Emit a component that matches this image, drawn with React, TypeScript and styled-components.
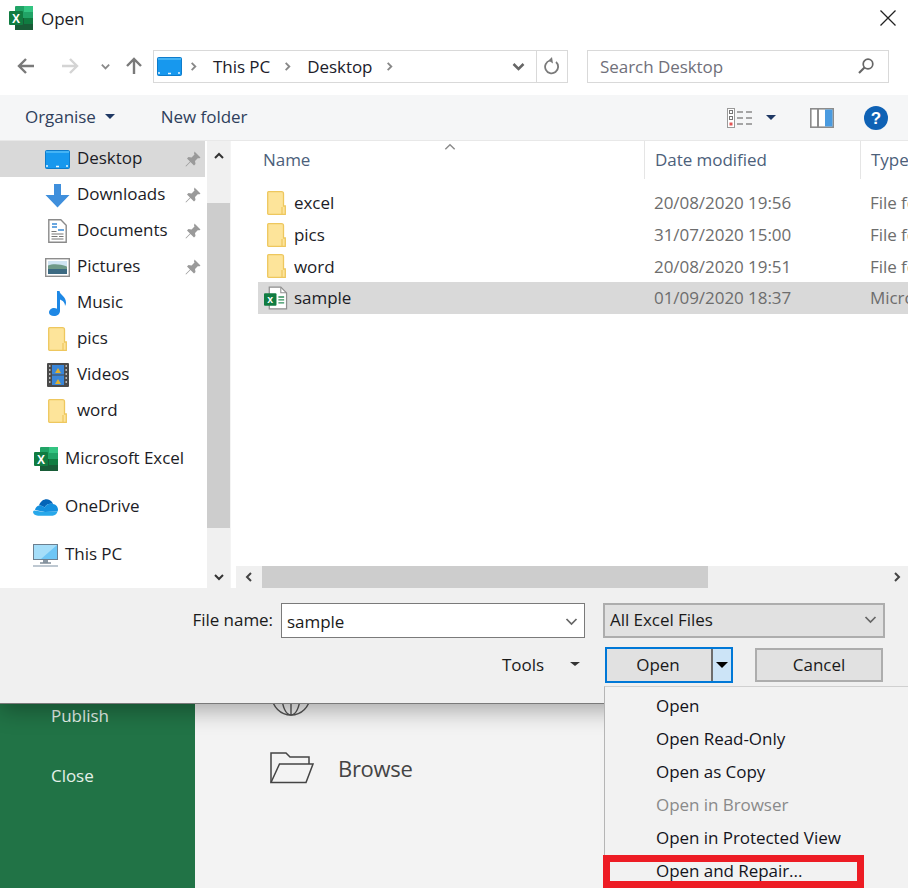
import styled, { createGlobalStyle } from "styled-components";

const GlobalStyle = createGlobalStyle`
	html, body {
		margin: 0;
		padding: 0;
		background: #f3f3f3;
	}
	* {
		box-sizing: border-box;
	}
`;

const FONT = `"Open Sans", "Noto Sans", sans-serif`;

const PageBase = styled.div`
	position: relative;
	width: 908px;
	height: 888px;
	overflow: hidden;
	font-family: ${FONT};
	font-size: 17px;
	letter-spacing: -0.05px;
	color: #1c1c26;
`;

const Dialog = styled.div`
	position: relative;
	z-index: 1;
	height: 704px;
	display: flex;
	flex-direction: column;
	background: #fff;
	border-bottom: 1px solid #7a7a7a;
	box-shadow: 0 6px 22px rgba(0, 0, 0, 0.32);
`;

const TitleBar = styled.div`
	height: 38px;
	display: flex;
	align-items: center;
	gap: 8px;
	padding: 0 12px 2px 9px;
`;

const TitleText = styled.span`
	flex: 1;
`;

const AddressRow = styled.div`
	height: 57px;
	display: flex;
	align-items: center;
	padding: 0 16px 1px 15px;
`;

const NavButton = styled.span<{ $width: number; $left?: number }>`
	width: ${(p) => p.$width}px;
	margin-left: ${(p) => p.$left ?? 0}px;
	display: flex;
	justify-content: center;
	align-items: center;
`;

const AddressBox = styled.div`
	width: 415px;
	height: 33px;
	margin-left: 9px;
	display: flex;
	align-items: center;
	border: 1px solid #d9d9d9;
	padding-left: 3px;
`;

const CrumbSeparator = styled.span<{ $first?: boolean }>`
	display: flex;
	margin-left: ${(p) => (p.$first ? 6 : 0)}px;
`;

const Crumb = styled.span`
	margin: 0 12px 0 14px;
	color: #20202a;
`;

const AddressEnd = styled.span`
	margin-left: auto;
	display: flex;
	align-items: center;
	height: 100%;
`;

const RefreshCell = styled.span`
	width: 31px;
	height: 100%;
	margin-left: 10px;
	border-left: 1px solid #d9d9d9;
	display: flex;
	align-items: center;
	justify-content: center;
`;

const SearchBox = styled.div`
	width: 302px;
	height: 33px;
	margin-left: 19px;
	display: flex;
	align-items: center;
	justify-content: space-between;
	padding: 0 13px 0 12px;
	border: 1px solid #d9d9d9;
	color: #70707a;
`;

const Toolbar = styled.div`
	height: 45px;
	display: flex;
	align-items: center;
	gap: 46px;
	padding: 0 19px 0 25px;
	background: #f5f6f7;
	color: #2f3f5c;
`;

const ToolbarLabel = styled.span`
	display: flex;
	align-items: center;
	gap: 9px;
	padding-bottom: 2px;
`;

const ToolbarRight = styled.span`
	margin-left: auto;
	display: flex;
	align-items: center;
`;

const ViewCaret = styled.span`
	display: flex;
	margin: 0 34px 0 13px;
`;

const HelpSlot = styled.span`
	display: flex;
	margin-left: 29px;
`;

const Caret = styled.span<{ $color?: string; $size?: number }>`
	display: inline-block;
	width: 0;
	height: 0;
	border-left: ${(p) => p.$size ?? 5.5}px solid transparent;
	border-right: ${(p) => p.$size ?? 5.5}px solid transparent;
	border-top: ${(p) => (p.$size ?? 5.5) - 0.5}px solid ${(p) => p.$color ?? "#1f3864"};
`;

const Body = styled.div`
	flex: 1;
	min-height: 0;
	display: flex;
	border-top: 1px solid #e8e8e8;
`;

const Sidebar = styled.div`
	width: 207px;
	display: flex;
	flex-direction: column;
	gap: 12px;
`;

const NavGroup = styled.div`
	display: flex;
	flex-direction: column;
`;

const NavItem = styled.div<{ $level: number; $selected?: boolean }>`
	height: 36px;
	width: 205px;
	display: flex;
	align-items: center;
	gap: 7px;
	padding-left: ${(p) => (p.$level === 1 ? 45 : 33)}px;
	padding-right: 4px;
	background: ${(p) => (p.$selected ? "#d9d9d9" : "transparent")};
`;

const NavIcon = styled.span`
	width: 25px;
	height: 25px;
	display: flex;
	align-items: center;
	justify-content: center;
	flex-shrink: 0;
`;

const NavLabel = styled.span`
	padding-bottom: 3px;
`;

const NavPin = styled.span`
	margin-left: auto;
	display: flex;
`;

const VScroll = styled.div`
	width: 24px;
	display: flex;
	flex-direction: column;
	background: #f0f0f0;
	border-right: 1px solid #f4f4f4;
`;

const VScrollEnd = styled.div<{ $height: number; $end?: boolean }>`
	height: ${(p) => p.$height}px;
	display: flex;
	justify-content: center;
	align-items: ${(p) => (p.$end ? "flex-end" : "flex-start")};
	padding: ${(p) => (p.$end ? "0 0 5px" : "9px 0 0")};
`;

const VScrollThumb = styled.div`
	flex: 1;
	width: 23px;
	background: #cdcdcd;
`;

const ListPane = styled.div`
	flex: 1;
	min-width: 0;
	display: flex;
	flex-direction: column;
	padding-left: 5px;
`;

const ListHeader = styled.div`
	position: relative;
	height: 38px;
	display: grid;
	grid-template-columns: 386px 216px 1fr;
	margin-left: 22px;
	color: #4c607a;
`;

const HeaderCell = styled.div<{ $first?: boolean }>`
	display: flex;
	align-items: center;
	padding-left: ${(p) => (p.$first ? 5 : 10)}px;
	padding-bottom: 2px;
	border-left: ${(p) => (p.$first ? "none" : "1px solid #e5e5e5")};
`;

const SortMark = styled.span`
	position: absolute;
	left: 185px;
	top: -1px;
	display: flex;
`;

const Rows = styled.div`
	flex: 1;
	padding-top: 8px;
	margin-left: 22px;
`;

const FileRow = styled.div<{ $selected?: boolean }>`
	height: 31.7px;
	display: grid;
	grid-template-columns: 386px 216px 1fr;
	align-items: center;
	background: ${(p) => (p.$selected ? "#d9d9d9" : "transparent")};
	white-space: nowrap;
	overflow: hidden;
`;

const NameCell = styled.div`
	display: flex;
	align-items: center;
	padding-left: 6px;
`;

const FileIconSlot = styled.span<{ $folder: boolean }>`
	width: 30px;
	display: flex;
	padding-left: ${(p) => (p.$folder ? 3 : 0)}px;
`;

const MetaCell = styled.div`
	padding-left: 10px;
	color: #6d6d6d;
	overflow: hidden;
`;

const HScroll = styled.div`
	height: 22px;
	display: flex;
	background: #f0f0f0;
`;

const HScrollEnd = styled.div<{ $grow?: boolean }>`
	width: ${(p) => (p.$grow ? "auto" : "26px")};
	flex: ${(p) => (p.$grow ? 1 : "none")};
	display: flex;
	align-items: center;
	justify-content: ${(p) => (p.$grow ? "flex-end" : "center")};
	padding-right: ${(p) => (p.$grow ? "5px" : 0)};
`;

const HScrollThumb = styled.div`
	width: 446px;
	background: #cdcdcd;
`;

const Footer = styled.div`
	height: 115px;
	background: #f0f0f0;
	display: flex;
	flex-direction: column;
	padding: 15px 23px 0 0;
	color: #1a1a1a;
`;

const FooterRow = styled.div`
	display: flex;
	align-items: center;
	justify-content: flex-end;
`;

const FieldLabel = styled.span`
	margin-right: 8px;
	padding-bottom: 2px;
`;

const Combo = styled.div<{ $width: number; $filled?: boolean }>`
	width: ${(p) => p.$width}px;
	height: 35px;
	margin-left: ${(p) => (p.$filled ? 18 : 0)}px;
	display: flex;
	align-items: center;
	justify-content: space-between;
	padding: ${(p) => (p.$filled ? "0 5px 2px" : "1px 5px 0")};
	background: ${(p) => (p.$filled ? "#e1e1e1" : "#fff")};
	border-style: solid;
	border-color: ${(p) => (p.$filled ? "#adadad" : "#7a7a7a")};
	border-width: ${(p) => (p.$filled ? "2px" : "1.5px")};
`;

const ActionRow = styled(FooterRow)`
	margin-top: 9px;
	margin-right: 2px;
`;

const ToolsLabel = styled.span`
	display: flex;
	align-items: center;
	gap: 26px;
	margin-right: 25px;
	padding-bottom: 2px;
`;

const SplitButton = styled.div`
	width: 128px;
	height: 36px;
	display: flex;
	border: 2px solid #0078d7;
	background: #e1e1e1;
`;

const SplitMain = styled.span`
	flex: 1;
	display: flex;
	align-items: center;
	justify-content: center;
	padding: 0 2px 1px 0;
	border-right: 2px solid #6d6d6d;
`;

const SplitArrow = styled.span`
	width: 18px;
	display: flex;
	align-items: center;
	justify-content: center;
	background: #cce4f7;
`;

const CancelButton = styled.div`
	width: 128px;
	height: 34px;
	margin-left: 22px;
	padding-bottom: 1px;
	display: flex;
	align-items: center;
	justify-content: center;
	background: #e1e1e1;
	border: 2px solid #adadad;
`;

const Backstage = styled.div`
	height: 184px;
	display: flex;
`;

const BackstageNav = styled.div`
	width: 195px;
	background: #217346;
	color: #e4f0e9;
	padding-left: 51px;
	display: flex;
	flex-direction: column;
	gap: 37px;
`;

const BackstageLink = styled.div`
	height: 23px;
	display: flex;
	align-items: center;
`;

const BackstageMain = styled.div`
	flex: 1;
	background: #f3f3f3;
	padding-left: 75px;
	color: #444;
	display: flex;
	flex-direction: column;
`;

const GlobeClip = styled.div`
	height: 12px;
	display: flex;
	align-items: flex-end;
	overflow: hidden;
	padding-left: 1px;
`;

const BrowseRow = styled.div`
	margin-top: 36px;
	display: flex;
	align-items: center;
	gap: 24px;
	font-size: 22px;
	letter-spacing: -0.3px;
`;

const Menu = styled.div`
	position: absolute;
	z-index: 2;
	left: 604px;
	top: 686px;
	width: 310px;
	height: 210px;
	padding: 2px 0 0 51px;
	background: #f2f2f2;
	border-left: 1px solid #b5b5b5;
	border-top: 1px solid #d0d0d0;
`;

const MenuItem = styled.div<{ $disabled?: boolean }>`
	height: 33px;
	display: flex;
	align-items: center;
	color: ${(p) => (p.$disabled ? "#8a8a8a" : "#14141c")};
`;

const Highlight = styled.div`
	position: absolute;
	z-index: 3;
	left: 603px;
	top: 855px;
	width: 261px;
	height: 33px;
	border: 7px solid #ed1c24;
`;

function ExcelLogo({ size }: { size: number }) {
	return (
		<svg width={size} height={size} viewBox="0 0 24 24">
			<rect x="6" y="0" width="18" height="24" rx="1" fill="#21a366" />
			<rect x="15" y="0" width="9" height="6" fill="#33c481" />
			<rect x="6" y="12" width="9" height="12" fill="#185c37" />
			<rect x="15" y="12" width="9" height="6" fill="#107c41" />
			<rect x="15" y="18" width="9" height="6" fill="#185c37" />
			<rect x="0" y="5" width="14" height="14" rx="1" fill="#107c41" />
			<text x="7" y="16.5" textAnchor="middle" fontSize="12" fontWeight="700" fontFamily="Liberation Sans, sans-serif" fill="#fff">
				X
			</text>
		</svg>
	);
}

function DesktopIcon() {
	return (
		<svg width="25" height="19" viewBox="0 0 25 19">
			<rect x="0.5" y="0.5" width="24" height="18" rx="1" fill="#1798ee" stroke="#0f7ccb" />
			<path d="M1 1h23v2H1z" fill="#45b4f5" />
			<path d="M1 16h2M11 16.5h3M21 16h2" stroke="#e8f5ff" strokeWidth="1.4" />
		</svg>
	);
}

function DownloadIcon() {
	return (
		<svg width="25" height="25" viewBox="0 0 25 25">
			<path d="M9 1h7v11h8.5L12.5 24.5.5 12H9z" fill="#3f8fdc" />
		</svg>
	);
}

function DocumentsIcon() {
	return (
		<svg width="19" height="24" viewBox="0 0 19 24">
			<path d="M.8.8h12l5.4 5.4v17H.8z" fill="#fff" stroke="#8a8a8a" strokeWidth="1.4" />
			<path d="M4 5h5M4 8h5M10 11h6" stroke="#3a8ad6" strokeWidth="1.5" />
			<path d="M3.5 12.5h5M3.5 15h12M3.5 17.5h6M11 17.5h4.5M3.5 20h12" stroke="#777" strokeWidth="1.2" />
		</svg>
	);
}

function PicturesIcon() {
	return (
		<svg width="25" height="19" viewBox="0 0 25 19">
			<rect x="0.7" y="0.7" width="23.6" height="17.6" fill="#fff" stroke="#8d8d8d" strokeWidth="1.4" />
			<rect x="3" y="3" width="19" height="5" fill="#cfe4f2" />
			<path d="M3 7.5c5-2 12-1.5 19 1V11H3z" fill="#6f9a88" />
			<rect x="3" y="11" width="19" height="5" fill="#3c6a82" />
		</svg>
	);
}

function MusicIcon() {
	return (
		<svg width="18" height="25" viewBox="0 0 18 25">
			<path d="M8 0h2.5c.5 4 6.500 5.500 6.500 11.500 0 1.500-.5 2.500-1 3.500.2-3.500-2.500-5.500-5-6.500V20c0 3-2.800 5-6 5C2 25 0 23.500 0 21.500 0 19 2.500 17 5 17c1.200 0 2.200.3 3 .8z" fill="#1e88e5" />
		</svg>
	);
}

function FolderIcon() {
	return (
		<svg width="19" height="24" viewBox="0 0 19 24">
			<path d="M1.500.7h13c1 0 2 1 2 2V15h1.800v8.300H1.500c-.5 0-.8-.3-.8-.8V1.500c0-.5.3-.8.8-.8z" fill="#fde49a" stroke="#eec75e" strokeWidth="1.3" />
			<path d="M15 16v7" stroke="#eec75e" strokeWidth="1.2" />
		</svg>
	);
}

function VideosIcon() {
	return (
		<svg width="22" height="24" viewBox="0 0 22 24">
			<rect width="22" height="24" rx="1" fill="#4a4a4a" />
			<rect x="5" y="2" width="12" height="9.5" fill="#3a86d8" />
			<rect x="5" y="12.5" width="12" height="9.5" fill="#3a86d8" />
			<path d="M8 10l3-5 3 5zM8 21l3-5 3 5z" fill="#e0b030" />
			<path d="M2 3h1.500M2 7h1.500M2 11h1.500M2 15h1.500M2 19h1.500M18.500 3H20M18.500 7H20M18.500 11H20M18.500 15H20M18.500 19H20" stroke="#ddd" strokeWidth="1.5" />
		</svg>
	);
}

function OneDriveIcon() {
	return (
		<svg width="25" height="17" viewBox="0 0 25 17">
			<path d="M6 6.500C7.500 2 11 0 14 .3c2.800.2 5 2 6 4.700-4-1-7 .5-8.500 3.500C10 7 8 6.300 6 6.500z" fill="#0364b8" />
			<path d="M6 6.500c2-.2 4 .5 5.500 2 1.500-3 4.500-4.500 8.500-3.500 2.500.2 5 2.500 5 5.500 0 .8-.2 1.500-.5 2L12 13 2 11c.5-2.500 2-4 4-4.500z" fill="#1490df" />
			<path d="M1 11.500 12 13l12.500-.5c-.7 2.500-2.500 4-5 4.200H5c-3 0-5-2-5-3.700 0-.5.4-1.200 1-1.500z" fill="#28a8ea" />
		</svg>
	);
}

function ThisPcIcon() {
	return (
		<svg width="25" height="23" viewBox="0 0 25 23">
			<rect x="0.5" y="0.5" width="24" height="15" fill="#6ec6f5" stroke="#6b7f8f" />
			<path d="M1 1h23L8 15H1z" fill="#a5def9" />
			<path d="M10 16h5v3h-5z" fill="#8a97a3" />
			<path d="M7 19h11" stroke="#7f8c98" strokeWidth="1.5" />
			<path d="M0 22h25" stroke="#a8b6c2" strokeWidth="1.5" />
		</svg>
	);
}

function PinIcon() {
	return (
		<svg width="16" height="16" viewBox="0 0 16 16">
			<path d="M9.500.5l6 6-1.500 1-1-.5-3 3 .5 3-1.500 1.500L5.500 11 1 15.500 0.500 15 5 10.500 2 7.500 3.500 6l3 .5 3-3-.5-1z" fill="#9a9a9a" />
		</svg>
	);
}

function Chevron({ dir, color = "#444", size = 12, weight = 2 }: { dir: "up" | "down" | "left" | "right"; color?: string; size?: number; weight?: number }) {
	const d = {
		up: "M2 8l4-4 4 4",
		down: "M2 4l4 4 4-4",
		left: "M8 2L4 6l4 4",
		right: "M4 2l4 4-4 4",
	}[dir];
	return (
		<svg width={size} height={size} viewBox="0 0 12 12">
			<path d={d} fill="none" stroke={color} strokeWidth={weight} />
		</svg>
	);
}

function ArrowIcon({ dir, color }: { dir: "left" | "right" | "up"; color: string }) {
	const d = {
		left: "M18 10H3M10 3l-7 7 7 7",
		right: "M2 10h15M10 3l7 7-7 7",
		up: "M10 18V3M3 10l7-7 7 7",
	}[dir];
	return (
		<svg width="20" height="20" viewBox="0 0 20 20">
			<path d={d} fill="none" stroke={color} strokeWidth="2.4" />
		</svg>
	);
}

function RefreshIcon() {
	return (
		<svg width="16" height="18" viewBox="0 0 16 18">
			<path d="M6 3.500A6.500 6.500 0 1 0 12 5" fill="none" stroke="#7a7a7a" strokeWidth="1.8" />
			<path d="M5 .5l4.500 3-3.500 3.500z" fill="#7a7a7a" transform="rotate(180 7 3.500)" />
		</svg>
	);
}

function SearchIcon() {
	return (
		<svg width="18" height="18" viewBox="0 0 18 18">
			<circle cx="11" cy="7" r="4.8" fill="none" stroke="#666" strokeWidth="1.7" />
			<path d="M7.500 10.500 2 16" stroke="#666" strokeWidth="2.2" />
		</svg>
	);
}

function ViewIcon() {
	return (
		<svg width="26" height="20" viewBox="0 0 26 20">
			<rect x="0.5" y="0.5" width="7" height="19" fill="#fff" stroke="#999" />
			<rect x="2.5" y="2.5" width="3" height="3" fill="none" stroke="#777" />
			<rect x="2.5" y="8.5" width="3" height="3" fill="none" stroke="#777" />
			<rect x="2.5" y="14.5" width="3" height="3" fill="#e25555" />
			<path d="M10 4h6M19 4h6M10 10h6M19 10h6M10 16h6M19 16h6" stroke="#8a8a8a" strokeWidth="1.5" />
		</svg>
	);
}

function PreviewIcon() {
	return (
		<svg width="24" height="20" viewBox="0 0 24 20">
			<rect x="0.8" y="0.8" width="22.4" height="18.4" fill="#fff" stroke="#8c8c8c" strokeWidth="1.6" />
			<rect x="7" y="1" width="2" height="18" fill="#8c8c8c" />
			<rect x="15" y="1.5" width="7.5" height="17" fill="#4a9be0" />
		</svg>
	);
}

function HelpIcon() {
	return (
		<svg width="26" height="26" viewBox="0 0 26 26">
			<circle cx="13" cy="13" r="12" fill="#0f62b5" />
			<text x="13" y="19" textAnchor="middle" fontSize="17" fontWeight="700" fontFamily="Liberation Sans, sans-serif" fill="#fff">
				?
			</text>
		</svg>
	);
}

function CloseIcon() {
	return (
		<svg width="16" height="16" viewBox="0 0 16 16">
			<path d="M.5.5l15 15M15.500.5l-15 15" stroke="#222" strokeWidth="1.3" />
		</svg>
	);
}

function SheetIcon() {
	return (
		<svg width="24" height="24" viewBox="0 0 25 24">
			<path d="M5.500.7h12l6 6v16.600h-18z" fill="#fff" stroke="#8f8f8f" strokeWidth="1.3" />
			<path d="M17.500 1v5.500h6" fill="none" stroke="#8f8f8f" strokeWidth="1.1" />
			<path d="M15 11h6M15 14h6M15 17h6" stroke="#2f8f5b" strokeWidth="1.4" />
			<rect x="0" y="7" width="13" height="13" rx="1" fill="#107c41" />
			<text x="6.5" y="17.5" textAnchor="middle" fontSize="11" fontWeight="700" fontFamily="Liberation Sans, sans-serif" fill="#fff">
				x
			</text>
		</svg>
	);
}

function GlobeIcon() {
	return (
		<svg width="40" height="40" viewBox="0 0 40 40" style={{ flexShrink: 0 }}>
			<circle cx="20" cy="20" r="19" fill="none" stroke="#555" strokeWidth="1.4" />
			<ellipse cx="20" cy="20" rx="9" ry="19" fill="none" stroke="#555" strokeWidth="1.4" />
			<path d="M20 1v38" stroke="#555" strokeWidth="1.4" />
		</svg>
	);
}

function BrowseIcon() {
	return (
		<svg width="44" height="32" viewBox="0 0 44 32">
			<path d="M1 30.500V1h15l4 4h19v7" fill="none" stroke="#444" strokeWidth="1.5" />
			<path d="M1 30.500 9.500 12H43l-7 18.500z" fill="#f3f3f3" stroke="#444" strokeWidth="1.5" />
		</svg>
	);
}

const NAV_QUICK = [
	{ label: "Desktop", icon: <DesktopIcon />, pinned: true },
	{ label: "Downloads", icon: <DownloadIcon />, pinned: true },
	{ label: "Documents", icon: <DocumentsIcon />, pinned: true },
	{ label: "Pictures", icon: <PicturesIcon />, pinned: true },
	{ label: "Music", icon: <MusicIcon />, pinned: false },
	{ label: "pics", icon: <FolderIcon />, pinned: false },
	{ label: "Videos", icon: <VideosIcon />, pinned: false },
	{ label: "word", icon: <FolderIcon />, pinned: false },
];

const NAV_ROOTS = [
	{ label: "Microsoft Excel", icon: <ExcelLogo size={24} /> },
	{ label: "OneDrive", icon: <OneDriveIcon /> },
	{ label: "This PC", icon: <ThisPcIcon /> },
];

const FILES = [
	{ name: "excel", date: "20/08/2020 19:56", type: "File folder" },
	{ name: "pics", date: "31/07/2020 15:00", type: "File folder" },
	{ name: "word", date: "20/08/2020 19:51", type: "File folder" },
	{ name: "sample", date: "01/09/2020 18:37", type: "Microsoft Excel" },
];

const MENU_ITEMS = [
	"Open",
	"Open Read-Only",
	"Open as Copy",
	"Open in Browser",
	"Open in Protected View",
	"Open and Repair...",
];

export default function App() {
	return (
		<PageBase>
			<GlobalStyle />
			<Dialog>
				<TitleBar>
					<ExcelLogo size={24} />
					<TitleText>Open</TitleText>
					<CloseIcon />
				</TitleBar>
				<AddressRow>
					<NavButton $width={22}>
						<ArrowIcon dir="left" color="#7a7a7a" />
					</NavButton>
					<NavButton $width={20} $left={23}>
						<ArrowIcon dir="right" color="#d4d4d4" />
					</NavButton>
					<NavButton $width={14} $left={18}>
						<Chevron dir="down" color="#8a8a8a" size={11} />
					</NavButton>
					<NavButton $width={20} $left={12}>
						<ArrowIcon dir="up" color="#7a7a7a" />
					</NavButton>
					<AddressBox>
						<DesktopIcon />
						<CrumbSeparator $first>
							<Chevron dir="right" color="#888" size={11} />
						</CrumbSeparator>
						<Crumb>This PC</Crumb>
						<CrumbSeparator>
							<Chevron dir="right" color="#888" size={11} />
						</CrumbSeparator>
						<Crumb>Desktop</Crumb>
						<CrumbSeparator>
							<Chevron dir="right" color="#888" size={11} />
						</CrumbSeparator>
						<AddressEnd>
							<Chevron dir="down" color="#666" size={15} />
							<RefreshCell>
								<RefreshIcon />
							</RefreshCell>
						</AddressEnd>
					</AddressBox>
					<SearchBox>
						Search Desktop
						<SearchIcon />
					</SearchBox>
				</AddressRow>
				<Toolbar>
					<ToolbarLabel>
						Organise <Caret />
					</ToolbarLabel>
					<ToolbarLabel>New folder</ToolbarLabel>
					<ToolbarRight>
						<ViewIcon />
						<ViewCaret>
							<Caret />
						</ViewCaret>
						<PreviewIcon />
						<HelpSlot>
							<HelpIcon />
						</HelpSlot>
					</ToolbarRight>
				</Toolbar>
				<Body>
					<Sidebar>
						<NavGroup>
							{NAV_QUICK.map((item) => (
								<NavItem key={item.label} $level={1} $selected={item.label === "Desktop"}>
									<NavIcon>{item.icon}</NavIcon>
									<NavLabel>{item.label}</NavLabel>
									{item.pinned && (
										<NavPin>
											<PinIcon />
										</NavPin>
									)}
								</NavItem>
							))}
						</NavGroup>
						{NAV_ROOTS.map((item) => (
							<NavGroup key={item.label}>
								<NavItem $level={0}>
									<NavIcon>{item.icon}</NavIcon>
									<NavLabel>{item.label}</NavLabel>
								</NavItem>
							</NavGroup>
						))}
					</Sidebar>
					<VScroll>
						<VScrollEnd $height={62}>
							<Chevron dir="up" color="#333" />
						</VScrollEnd>
						<VScrollThumb />
						<VScrollEnd $height={60} $end>
							<Chevron dir="down" color="#333" />
						</VScrollEnd>
					</VScroll>
					<ListPane>
						<ListHeader>
							<HeaderCell $first>Name</HeaderCell>
							<HeaderCell>Date modified</HeaderCell>
							<HeaderCell>Type</HeaderCell>
							<SortMark>
								<Chevron dir="up" color="#8a8a8a" size={14} weight={1.2} />
							</SortMark>
						</ListHeader>
						<Rows>
							{FILES.map((file) => {
								const isSheet = file.name === "sample";
								return (
									<FileRow key={file.name} $selected={isSheet}>
										<NameCell>
											<FileIconSlot $folder={!isSheet}>
												{isSheet ? <SheetIcon /> : <FolderIcon />}
											</FileIconSlot>
											{file.name}
										</NameCell>
										<MetaCell>{file.date}</MetaCell>
										<MetaCell>{file.type}</MetaCell>
									</FileRow>
								);
							})}
						</Rows>
						<HScroll>
							<HScrollEnd>
								<Chevron dir="left" color="#444" />
							</HScrollEnd>
							<HScrollThumb />
							<HScrollEnd $grow>
								<Chevron dir="right" color="#444" />
							</HScrollEnd>
						</HScroll>
					</ListPane>
				</Body>
				<Footer>
					<FooterRow>
						<FieldLabel>File name:</FieldLabel>
						<Combo $width={304}>
							sample
							<Chevron dir="down" color="#666" size={15} weight={1.4} />
						</Combo>
						<Combo $width={282} $filled>
							All Excel Files
							<Chevron dir="down" color="#666" size={15} weight={1.4} />
						</Combo>
					</FooterRow>
					<ActionRow>
						<ToolsLabel>
							Tools <Caret $color="#333" $size={5} />
						</ToolsLabel>
						<SplitButton>
							<SplitMain>Open</SplitMain>
							<SplitArrow>
								<Caret $color="#000" $size={6.5} />
							</SplitArrow>
						</SplitButton>
						<CancelButton>Cancel</CancelButton>
					</ActionRow>
				</Footer>
			</Dialog>
			<Backstage>
				<BackstageNav>
					<BackstageLink>Publish</BackstageLink>
					<BackstageLink>Close</BackstageLink>
				</BackstageNav>
				<BackstageMain>
					<GlobeClip>
						<GlobeIcon />
					</GlobeClip>
					<BrowseRow>
						<BrowseIcon />
						Browse
					</BrowseRow>
				</BackstageMain>
			</Backstage>
			<Menu>
				{MENU_ITEMS.map((item) => (
					<MenuItem key={item} $disabled={item === "Open in Browser"}>
						{item}
					</MenuItem>
				))}
			</Menu>
			<Highlight />
		</PageBase>
	);
}
